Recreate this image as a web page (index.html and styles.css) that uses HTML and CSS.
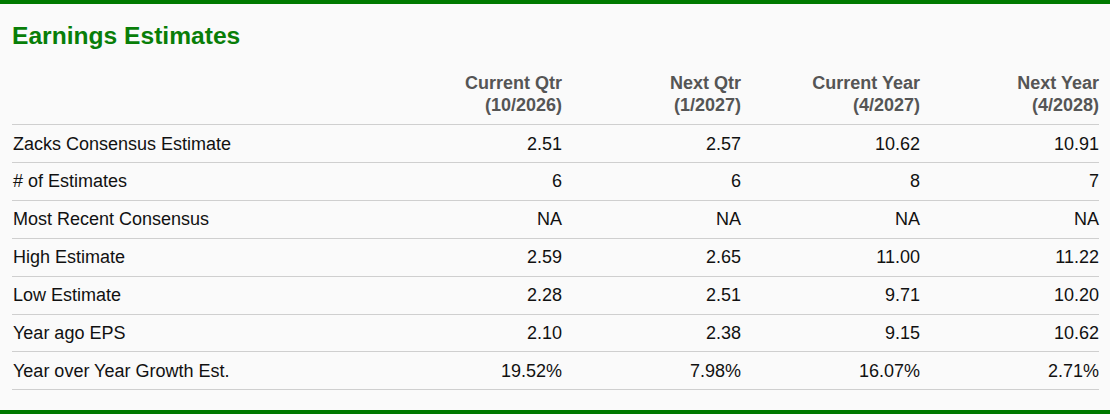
FILE: index.html
```html
<!DOCTYPE html>
<html>
<head>
<meta charset="utf-8">
<link rel="stylesheet" href="styles.css">
</head>
<body>
<section class="panel">
  <h2 class="title">Earnings Estimates</h2>
  <table class="est">
    <colgroup>
      <col class="c-label"><col class="c-num"><col class="c-num"><col class="c-num"><col class="c-num">
    </colgroup>
    <thead>
      <tr>
        <th></th>
        <th>Current Qtr<br>(10/2026)</th>
        <th>Next Qtr<br>(1/2027)</th>
        <th>Current Year<br>(4/2027)</th>
        <th>Next Year<br>(4/2028)</th>
      </tr>
    </thead>
    <tbody>
      <tr><td>Zacks Consensus Estimate</td><td>2.51</td><td>2.57</td><td>10.62</td><td>10.91</td></tr>
      <tr><td># of Estimates</td><td>6</td><td>6</td><td>8</td><td>7</td></tr>
      <tr><td>Most Recent Consensus</td><td>NA</td><td>NA</td><td>NA</td><td>NA</td></tr>
      <tr><td>High Estimate</td><td>2.59</td><td>2.65</td><td>11.00</td><td>11.22</td></tr>
      <tr><td>Low Estimate</td><td>2.28</td><td>2.51</td><td>9.71</td><td>10.20</td></tr>
      <tr><td>Year ago EPS</td><td>2.10</td><td>2.38</td><td>9.15</td><td>10.62</td></tr>
      <tr><td>Year over Year Growth Est.</td><td>19.52%</td><td>7.98%</td><td>16.07%</td><td>2.71%</td></tr>
    </tbody>
  </table>
</section>
</body>
</html>
```

FILE: styles.css
```css
html, body {
  margin: 0;
  padding: 0;
  background: #fafafa;
}
.panel {
  box-sizing: border-box;
  width: 1110px;
  height: 414px;
  overflow: hidden;
  background: #fafafa;
  border-top: 4px solid #007a00;
  border-bottom: 4px solid #007a00;
  padding: 0 11px 0 12px;
  font-family: "Liberation Sans", Arial, sans-serif;
}
.title {
  margin: 18px 0 0 0;
  font-size: 24.6px;
  line-height: 28px;
  font-weight: bold;
  color: #087e08;
}
.est {
  margin-top: 22px;
  width: 1087px;
  border-collapse: collapse;
  table-layout: fixed;
}
.c-label { width: 371px; }
.c-num { width: 179px; }
.est th {
  padding: 0 0 8px 0;
  font-size: 18px;
  line-height: 22px;
  font-weight: bold;
  color: #555555;
  text-align: right;
  vertical-align: bottom;
  border-bottom: 1px solid #cfcfcf;
}
.est td {
  box-sizing: border-box;
  padding: 1.5px 0 0 0;
  height: 36.9px;
  font-size: 18px;
  line-height: 35.4px;
  color: #111111;
  text-align: right;
  border-bottom: 1px solid #cfcfcf;
  white-space: nowrap;
}
.est td:first-child {
  text-align: left;
  padding-left: 1px;
}
```
